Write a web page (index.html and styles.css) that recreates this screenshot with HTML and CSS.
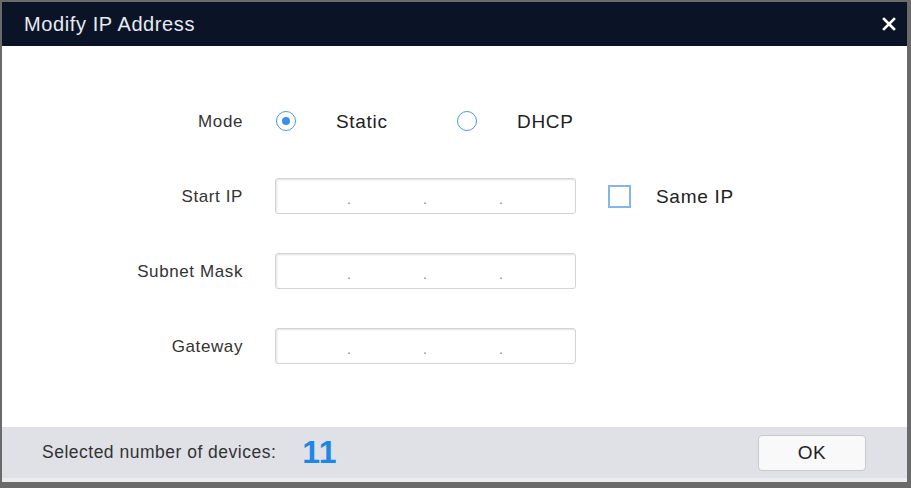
FILE: index.html
```html
<!DOCTYPE html>
<html>
<head>
<meta charset="utf-8">
<title>Modify IP Address</title>
<link rel="stylesheet" href="styles.css">
</head>
<body>
<div class="window">
  <div class="titlebar">
    <span class="title">Modify IP Address</span>
    <svg class="close" width="14" height="14" viewBox="0 0 14 14"><path d="M2 2 L12 12 M12 2 L2 12" stroke="#ffffff" stroke-width="2.6" stroke-linecap="square"/></svg>
  </div>
  <div class="content">
    <div class="row">
      <div class="label">Mode</div>
      <div class="field options">
        <div class="option"><span class="radio checked"></span><span class="opt-text">Static</span></div>
        <div class="option"><span class="radio"></span><span class="opt-text">DHCP</span></div>
      </div>
    </div>
    <div class="row">
      <div class="label">Start IP</div>
      <div class="field">
        <div class="ipbox"><span class="dot">.</span><span class="dot">.</span><span class="dot">.</span></div>
        <div class="same"><span class="checkbox"></span><span class="opt-text">Same IP</span></div>
      </div>
    </div>
    <div class="row">
      <div class="label">Subnet Mask</div>
      <div class="field">
        <div class="ipbox"><span class="dot">.</span><span class="dot">.</span><span class="dot">.</span></div>
      </div>
    </div>
    <div class="row">
      <div class="label">Gateway</div>
      <div class="field">
        <div class="ipbox"><span class="dot">.</span><span class="dot">.</span><span class="dot">.</span></div>
      </div>
    </div>
  </div>
  <div class="footer">
    <span class="count-label">Selected number of devices:</span>
    <span class="count">11</span>
    <button class="ok">OK</button>
  </div>
</div>
</body>
</html>
```
FILE: styles.css
```css
html, body {
  margin: 0;
  padding: 0;
  background: #ffffff;
}
body {
  font-family: "Liberation Sans", Arial, sans-serif;
  width: 911px;
  height: 488px;
  overflow: hidden;
}
.window {
  box-sizing: border-box;
  width: 911px;
  height: 488px;
  border-style: solid;
  border-color: #6a6a6a;
  border-width: 2px 4px 6px 2px;
  display: flex;
  flex-direction: column;
  background: #ffffff;
}
.titlebar {
  height: 44px;
  flex: none;
  background: #0b1426;
  display: flex;
  align-items: center;
  justify-content: space-between;
  padding: 0 11px 0 22px;
}
.title {
  color: #e6ebf2;
  font-size: 20px;
  letter-spacing: 0.6px;
}
.close {
  display: block;
}
.content {
  flex: 1;
  padding-top: 57px;
  display: flex;
  flex-direction: column;
  gap: 39px;
}
.row {
  display: flex;
  align-items: center;
  height: 36px;
}
.label {
  width: 241px;
  text-align: right;
  font-size: 17px;
  letter-spacing: 0.6px;
  color: #333333;
  flex: none;
  padding-top: 1px;
}
.field {
  margin-left: 32px;
  display: flex;
  align-items: center;
}
.options {
  padding-left: 1px;
}
.option {
  display: flex;
  align-items: center;
  width: 181px;
}
.radio {
  box-sizing: border-box;
  width: 20px;
  height: 20px;
  border-radius: 50%;
  border: 1.5px solid #4f97e0;
  background: #ffffff;
  display: flex;
  align-items: center;
  justify-content: center;
  margin-right: 40px;
}
.radio.checked::after {
  content: "";
  width: 8px;
  height: 8px;
  border-radius: 50%;
  background: #3b8ee8;
}
.opt-text {
  font-size: 19px;
  letter-spacing: 0.7px;
  color: #222222;
  padding-top: 1px;
}
.ipbox {
  box-sizing: border-box;
  width: 301px;
  height: 36px;
  border: 1px solid #d4d4d4;
  border-radius: 3px;
  box-shadow: inset 1px 1px 2px rgba(0,0,0,0.12);
  display: flex;
  align-items: center;
  padding: 5px 0 0 71px;
  gap: 72px;
}
.dot {
  font-size: 14px;
  color: #888888;
  width: 4px;
}
.same {
  display: flex;
  align-items: center;
  margin-left: 32px;
}
.checkbox {
  box-sizing: border-box;
  width: 23px;
  height: 23px;
  border: 2px solid #86b6e6;
  background: #ffffff;
  margin-right: 25px;
}
.footer {
  height: 55px;
  flex: none;
  box-sizing: border-box;
  background: #dfe1e6;
  border-bottom: 4px solid #ebecef;
  display: flex;
  align-items: center;
  padding: 0 41px 0 40px;
}
.count-label {
  font-size: 17.5px;
  letter-spacing: 0.5px;
  color: #333333;
}
.count {
  font-size: 32px;
  font-weight: bold;
  color: #1e86e4;
  margin-left: 26px;
  letter-spacing: 0.5px;
}
.ok {
  margin-left: auto;
  width: 108px;
  height: 36px;
  background: #f9f9f9;
  border: 1px solid #c9c9c9;
  border-radius: 4px;
  font-family: "Liberation Sans", Arial, sans-serif;
  font-size: 19px;
  letter-spacing: 0.5px;
  color: #222222;
  padding: 0;
}
```
